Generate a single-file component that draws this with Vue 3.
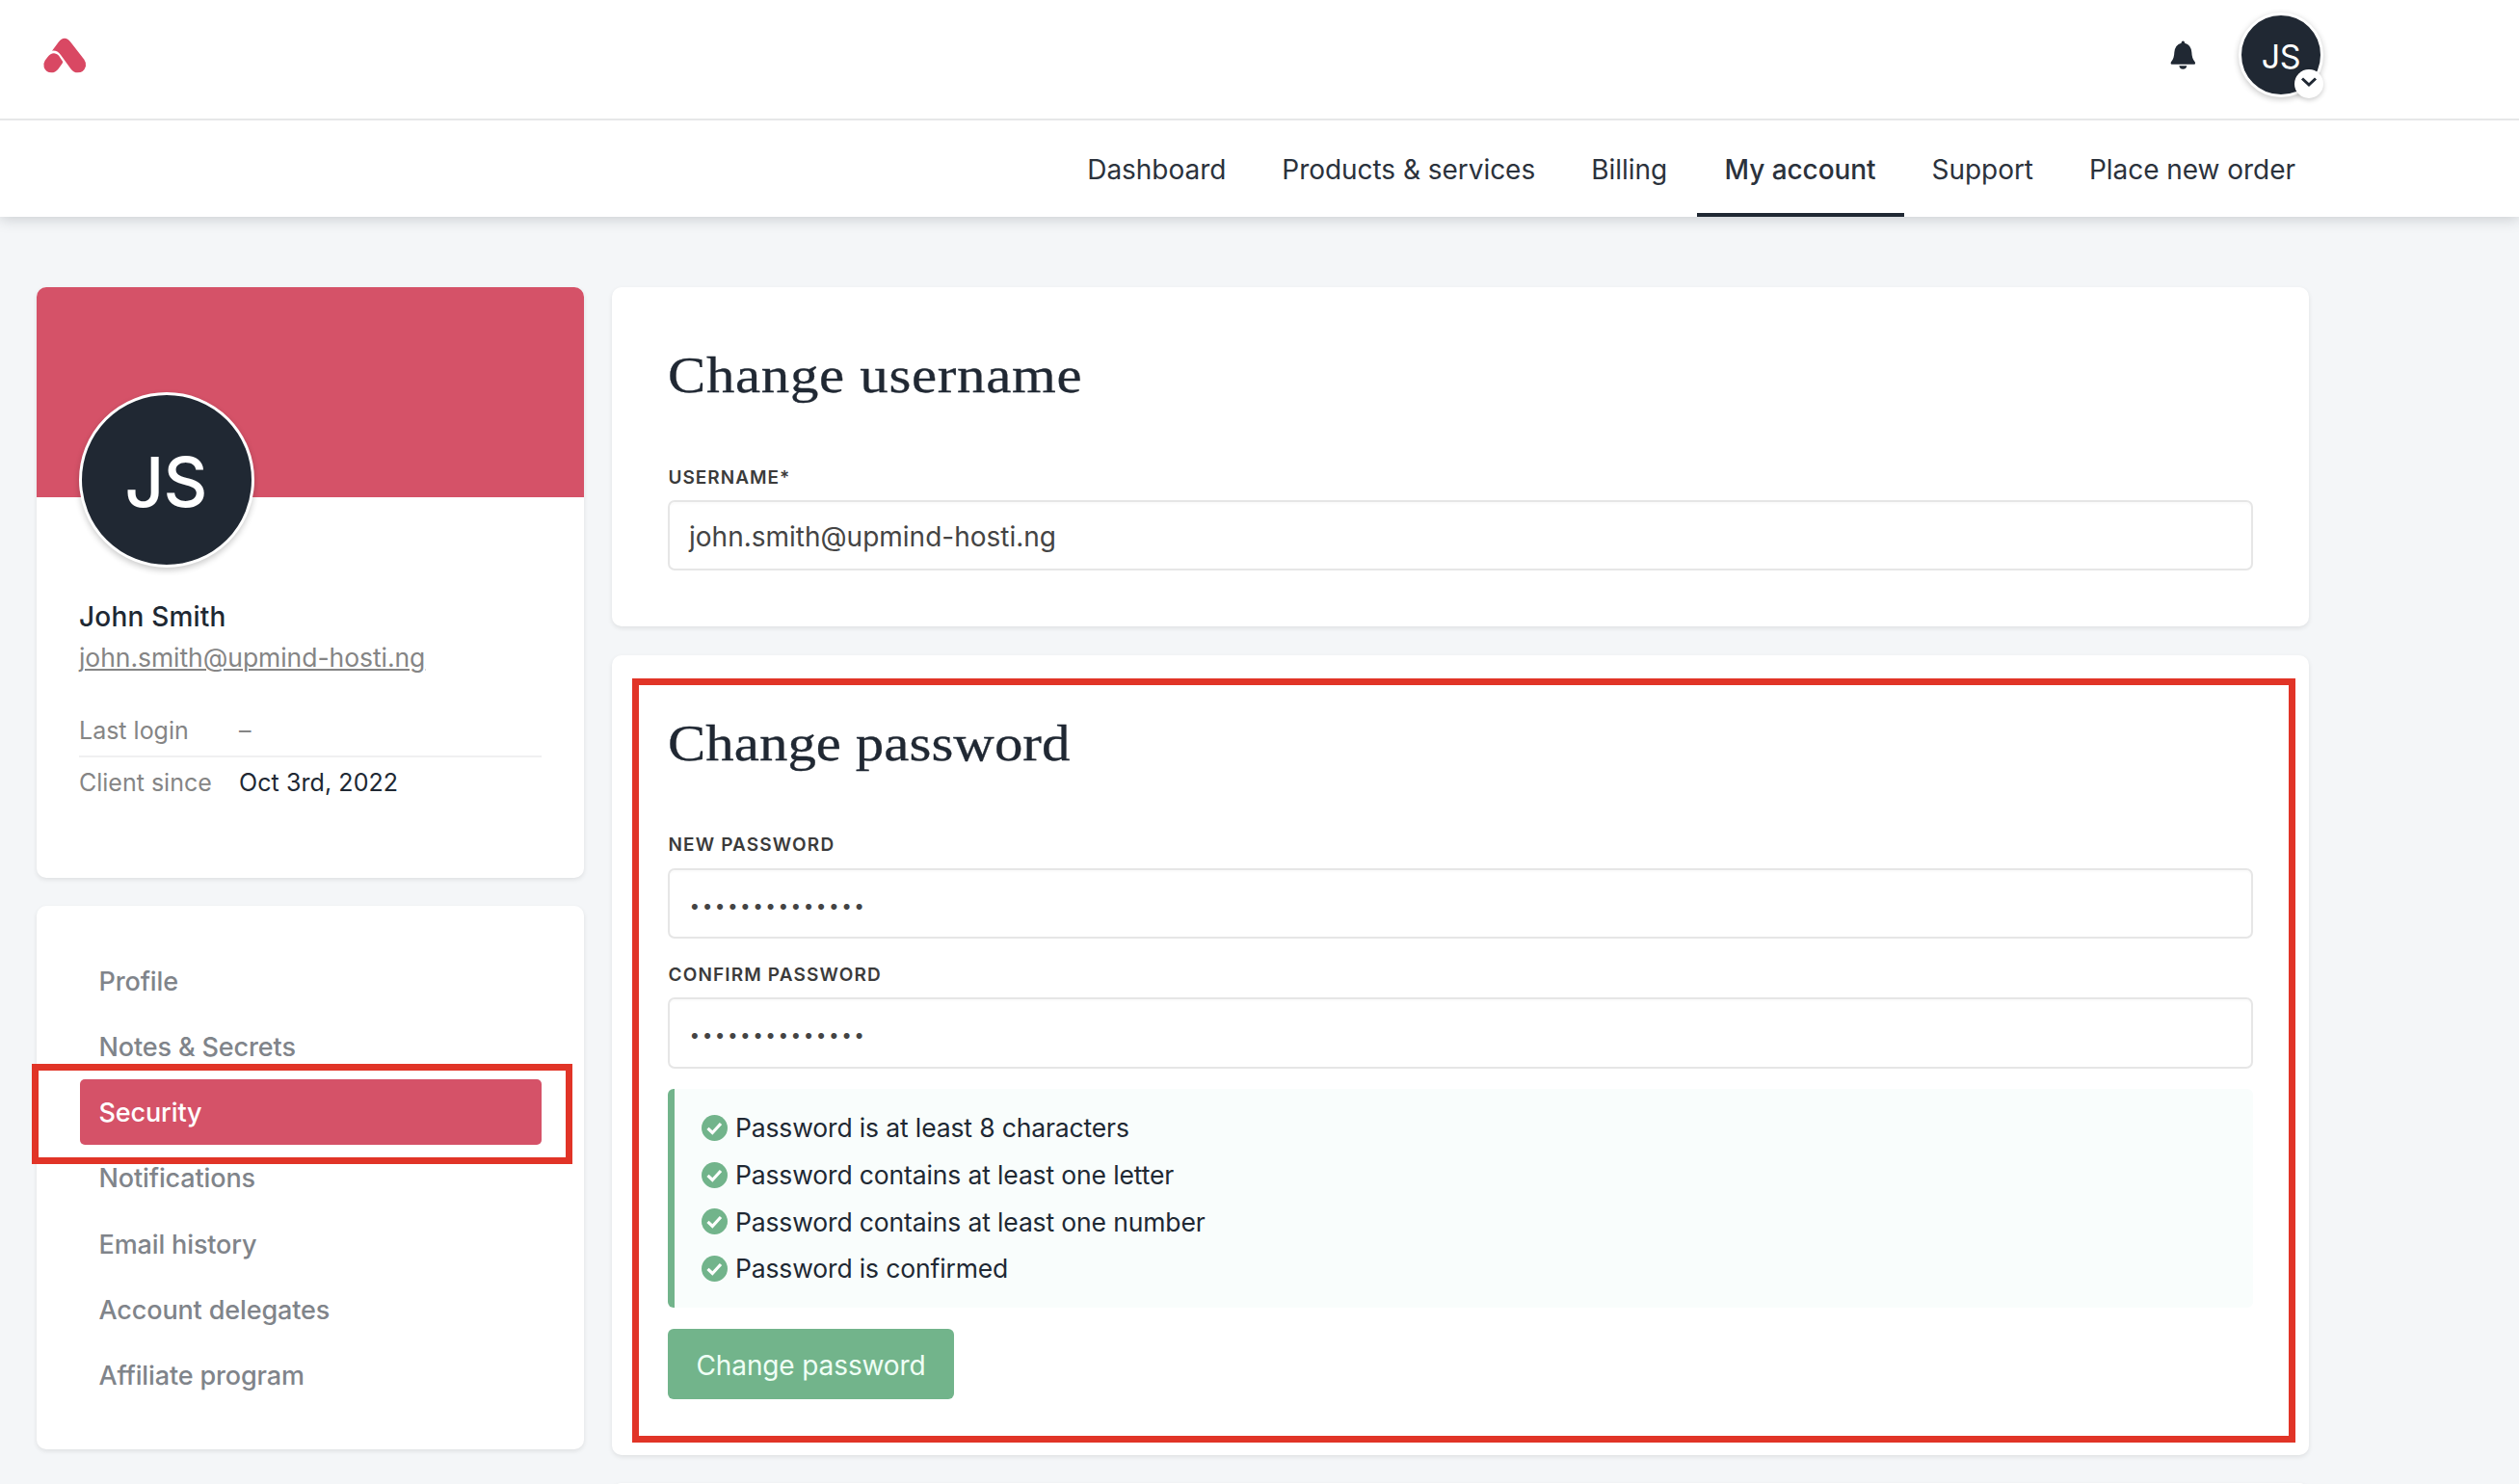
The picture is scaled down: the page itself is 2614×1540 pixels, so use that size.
<template>
  <div class="page">
    <header class="header">
      <div class="topbar">
        <svg class="logo" viewBox="132 116 140 112" aria-hidden="true">
          <path d="M162 157 L182 130 Q191 118.500 201 118.500 Q211 118.500 220 130 L262 184 Q269 194 267 205 Q261 225 242 225 Q229 225 221 214 L189 170 Q178 155 162 157Z" />
          <path d="M148 177 Q157 165 168 165 Q180 166 187 178 L195 190 Q196 193 194 196 L181 214 Q172 225 160 225 Q143 225 137 209 Q133 198 140 187Z" />
        </svg>
        <div class="topbar-right">
          <svg class="bell" viewBox="155 126 80 92" aria-hidden="true">
            <path d="M195 127.500 Q200 127.500 200.500 134 Q220 139 222 163 Q222.500 183 232 193 Q235 200 230 200 H160 Q155 200 158 193 Q167.500 183 168 163 Q170 139 189.500 134 Q190 127.500 195 127.500Z" />
            <path d="M183 205 H207 Q205 215.500 195 215.500 Q185 215.500 183 205Z" />
          </svg>
          <div class="avatar avatar-small">
            JS
            <span class="avatar-badge">
              <svg viewBox="0 0 20 14" aria-hidden="true"><path d="M3 3.500 L10 10 L17 3.500" /></svg>
            </span>
          </div>
        </div>
      </div>
      <nav class="nav">
        <a v-for="item in nav" :key="item" class="nav-item" :class="{ active: item === 'My account' }">{{ item }}</a>
      </nav>
    </header>

    <div class="content">
      <aside class="sidebar">
        <section class="card profile">
          <div class="banner"></div>
          <div class="profile-body">
            <div class="avatar avatar-large">JS</div>
            <div class="name">John Smith</div>
            <a class="email">john.smith@upmind-hosti.ng</a>
            <dl class="details">
              <div class="detail"><dt>Last login</dt><dd class="muted">–</dd></div>
              <div class="detail"><dt>Client since</dt><dd>Oct 3rd, 2022</dd></div>
            </dl>
          </div>
        </section>

        <section class="card menu">
          <a v-for="item in menu" :key="item" class="menu-item" :class="{ active: item === 'Security' }">
            {{ item }}
            <span v-if="item === 'Security'" class="highlight highlight-menu"></span>
          </a>
        </section>
      </aside>

      <main class="main">
        <section class="card panel">
          <h2 class="title-username">Change username</h2>
          <label class="label-username">USERNAME*</label>
          <div class="input">john.smith@upmind-hosti.ng</div>
        </section>

        <section class="card panel">
          <h2>Change password</h2>
          <label>NEW PASSWORD</label>
          <div class="input password">••••••••••••••</div>
          <label class="label-next">CONFIRM PASSWORD</label>
          <div class="input password">••••••••••••••</div>
          <ul class="rules">
            <li v-for="rule in rules" :key="rule">
              <svg viewBox="0 0 27 27" aria-hidden="true">
                <circle cx="13.500" cy="13.500" r="13.500" />
                <path d="M6.500 13.800 L11.300 18.500 L20 9" />
              </svg>
              {{ rule }}
            </li>
          </ul>
          <button class="submit" type="button">Change password</button>
          <span class="highlight highlight-panel"></span>
        </section>

        <section class="card panel"></section>
      </main>
    </div>
  </div>
</template>

<script setup>
const nav = ['Dashboard', 'Products & services', 'Billing', 'My account', 'Support', 'Place new order'];

const menu = [
  'Profile',
  'Notes & Secrets',
  'Security',
  'Notifications',
  'Email history',
  'Account delegates',
  'Affiliate program',
];

const rules = [
  'Password is at least 8 characters',
  'Password contains at least one letter',
  'Password contains at least one number',
  'Password is confirmed',
];
</script>

<style>
body {
  background: #f4f6f8;
}
</style>

<style scoped>
.page {
  width: 2614px;
  height: 1540px;
  overflow: hidden;
  background: #f4f6f8;
  color: #202833;
  font-family: Inter, 'Liberation Sans', sans-serif;
}

.page * {
  box-sizing: border-box;
}

/* Header */
.header {
  height: 225px;
  background: #fff;
  box-shadow: 0 2px 14px rgba(40, 50, 60, 0.22);
  position: relative;
}

.topbar {
  height: 124.500px;
  padding: 0 203px 0 44px;
  border-bottom: 2px solid #e6e7e8;
  display: flex;
  justify-content: space-between;
}

.logo {
  width: 46.7px;
  height: 37.3px;
  margin-top: 38.7px;
  fill: #d94863;
}

.topbar-right {
  display: flex;
  align-items: flex-start;
  gap: 44px;
}

.bell {
  width: 26.7px;
  height: 30.7px;
  margin-top: 42px;
  fill: #202833;
}

.avatar {
  display: flex;
  align-items: center;
  justify-content: center;
  border-radius: 50%;
  background: #202833;
  border: 3px solid #fff;
  color: #fff;
}

.avatar-small {
  width: 88px;
  height: 88px;
  margin-top: 13px;
  font-size: 34px;
  padding-top: 2px;
  letter-spacing: -0.4px;
  box-shadow: 0 2px 6px rgba(0, 0, 0, 0.22);
  position: relative;
}

.avatar-badge {
  position: absolute;
  right: -3px;
  bottom: -3.5px;
  width: 30px;
  height: 30px;
  border-radius: 50%;
  background: #fff;
  box-shadow: 0 2px 5px rgba(0, 0, 0, 0.2);
  display: flex;
  align-items: center;
  justify-content: center;
}

.avatar-badge svg {
  width: 20px;
  height: 14px;
  margin-bottom: 3px;
  fill: none;
  stroke: #202833;
  stroke-width: 3;
}

.nav {
  height: 100.5px;
  padding-right: 203px;
  display: flex;
  justify-content: flex-end;
}

.nav-item {
  padding: 4px 29px 0;
  border-bottom: 4px solid transparent;
  font-size: 28px;
  line-height: 94px;
  letter-spacing: -0.04px;
  color: #2b323c;
  white-space: nowrap;
}

.nav-item.active {
  margin-left: 1.5px;
  font-weight: 500;
  letter-spacing: -0.07px;
  border-bottom-color: #202833;
}

/* Layout */
.content {
  display: flex;
  align-items: flex-start;
  gap: 29.5px;
  padding: 73px 218px 0 38px;
}

.sidebar {
  width: 567.5px;
  display: flex;
  flex-direction: column;
  gap: 29px;
}

.main {
  flex: 1;
  display: flex;
  flex-direction: column;
  gap: 29.5px;
}

.card {
  background: #fff;
  border-radius: 10px;
  box-shadow: 0 2px 5px rgba(0, 0, 0, 0.09);
  position: relative;
}

/* Profile card */
.profile {
  height: 613px;
}

.banner {
  height: 218px;
  border-radius: 10px 10px 0 0;
  background: #d55268;
}

.profile-body {
  padding: 0 44px;
  margin-top: -109px;
}

.avatar-large {
  width: 182px;
  height: 182px;
  padding-top: 3px;
  padding-right: 2px;
  font-size: 71px;
  font-weight: 500;
  letter-spacing: -0.8px;
  box-shadow: 0 3px 6px rgba(0, 0, 0, 0.2);
}

.name {
  margin-top: 31px;
  font-size: 28px;
  line-height: 40px;
  font-weight: 500;
  letter-spacing: 0.2px;
}

.email {
  display: block;
  margin-top: 2px;
  font-size: 26.5px;
  line-height: 40px;
  letter-spacing: -0.05px;
  color: #858585;
  text-decoration: underline;
  text-decoration-thickness: 2px;
  text-underline-offset: 2px;
}

.details {
  margin: 30px 0 0;
  font-size: 25px;
}

.detail {
  display: grid;
  grid-template-columns: 166px 1fr;
  line-height: 52px;
}

.detail:first-child {
  border-bottom: 2px solid #f0f0f1;
}

.detail dt {
  color: #858585;
}

.detail dd {
  margin: 0;
  letter-spacing: 0.08px;
}

.detail dd.muted {
  color: #858585;
}

/* Account menu */
.menu {
  padding: 43.5px 43.5px 42px 44.5px;
}

.menu-item {
  display: block;
  height: 68.3px;
  padding-left: 20px;
  border-radius: 5px;
  font-size: 27px;
  line-height: 70.3px;
  font-weight: 500;
  letter-spacing: -0.13px;
  color: #80848a;
  position: relative;
}

.menu-item.active {
  background: #d55268;
  color: #fff;
}

/* Red callout frames drawn over the cards */
.highlight {
  position: absolute;
  border: 7px solid #e13427;
  pointer-events: none;
}

.highlight-menu {
  left: -50px;
  right: -32px;
  top: -16px;
  bottom: -20px;
}

.highlight-panel {
  left: 20.5px;
  right: 14.5px;
  top: 24px;
  bottom: 12.5px;
}

/* Form panels */
.panel {
  padding: 61px 58px 58px;
}

/* The serif is stretched sideways for wider letterforms */
h2 {
  margin: 0;
  font-family: 'Liberation Serif', serif;
  font-size: 53px;
  line-height: 60px;
  font-weight: 400;
  letter-spacing: 0.05px;
  transform: scaleX(1.11);
  transform-origin: left;
  width: 50%;
  -webkit-text-stroke: 0.3px #202833;
}

.title-username {
  letter-spacing: 0.63px;
}

label {
  display: block;
  margin: 61.5px 0 8.5px 0.5px;
  font-size: 19px;
  line-height: 30px;
  font-weight: 600;
  letter-spacing: 1.15px;
  color: #3b3b3b;
}

.label-username {
  letter-spacing: 1px;
}

.label-next {
  margin-top: 22.8px;
}

.input {
  height: 73.3px;
  padding-left: 20px;
  border: 2px solid #e6e6e6;
  border-radius: 7px;
  box-shadow: inset 0 2px 2px rgba(0, 0, 0, 0.02);
  font-size: 28px;
  line-height: 73px;
  color: #444;
}

.input.password {
  padding-left: 20.5px;
  font-size: 19px;
  line-height: 75px;
  letter-spacing: 2.45px;
}

.rules {
  margin: 21.3px 0;
  padding: 16.5px 0 16.5px 41px;
  border-left: 7px solid #72b48b;
  border-radius: 6px;
  background: #f9fdfc;
  list-style: none;
}

.rules li {
  height: 48.6px;
  display: flex;
  align-items: center;
  gap: 8px;
  margin-left: -13px;
  font-size: 26.5px;
  line-height: 48.6px;
  letter-spacing: -0.14px;
}

.rules svg {
  width: 27px;
  height: 27px;
  fill: #72b48b;
}

.rules svg path {
  fill: none;
  stroke: #fff;
  stroke-width: 3.2;
}

.submit {
  display: block;
  height: 73px;
  width: 297px;
  padding: 3px 0 0;
  border: none;
  border-radius: 6px;
  background: #72b48b;
  color: #effff5;
  font-family: inherit;
  font-size: 28px;
  letter-spacing: -0.12px;
}
</style>
